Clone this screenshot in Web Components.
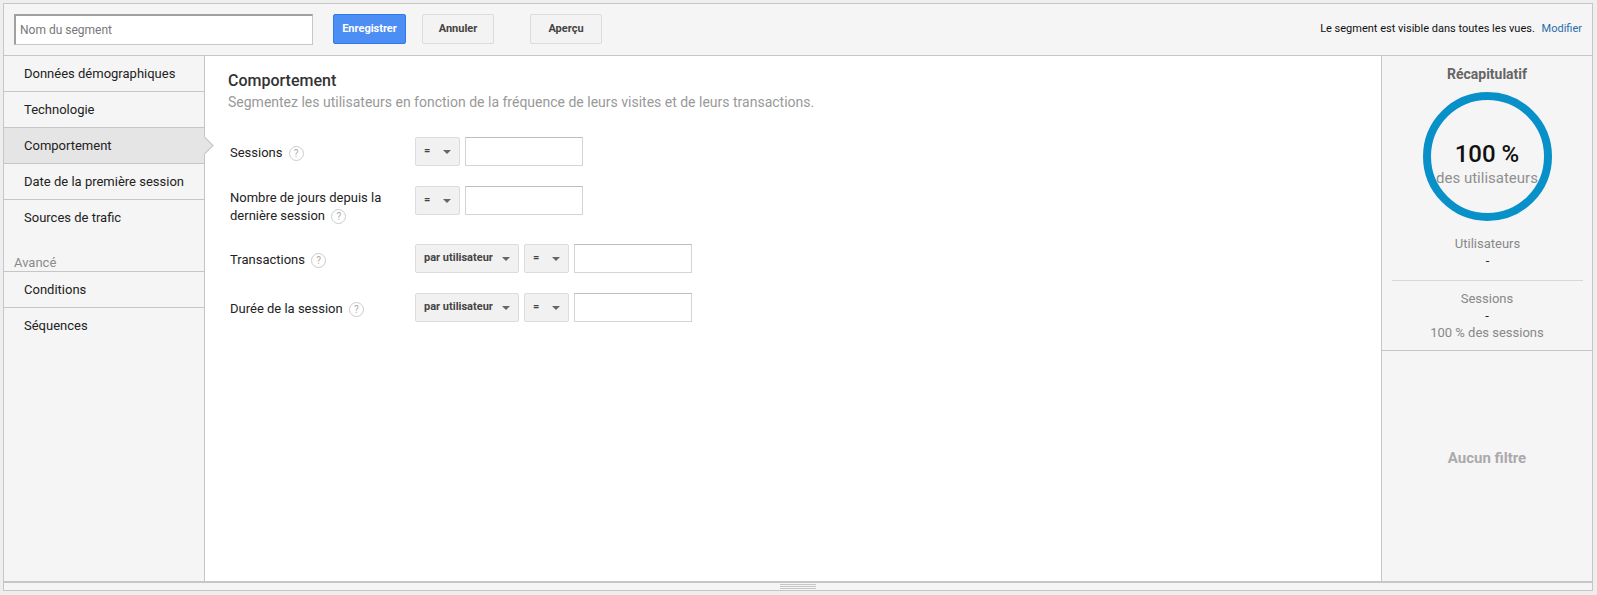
<!DOCTYPE html>
<html lang="fr">
<head>
<meta charset="utf-8">
<title>Segment</title>
<style>
	html, body { margin: 0; height: 100%; background: #eeeeee; overflow: hidden; }
	body { font: 13px Roboto, "Liberation Sans", sans-serif; color: #222; }
</style>
</head>
<body>
<segment-builder>
	<segment-toolbar slot="top"></segment-toolbar>
	<segment-nav slot="nav">
		<segment-nav-item>Données démographiques</segment-nav-item>
		<segment-nav-item>Technologie</segment-nav-item>
		<segment-nav-item active>Comportement</segment-nav-item>
		<segment-nav-item>Date de la première session</segment-nav-item>
		<segment-nav-item last>Sources de trafic</segment-nav-item>
		<segment-nav-item heading>Avancé</segment-nav-item>
		<segment-nav-item>Conditions</segment-nav-item>
		<segment-nav-item last>Séquences</segment-nav-item>
	</segment-nav>
	<segment-form slot="main">
		<segment-field>Sessions</segment-field>
		<segment-field wrap>Nombre de jours depuis la dernière session</segment-field>
		<segment-field scope>Transactions</segment-field>
		<segment-field scope>Durée de la session</segment-field>
	</segment-form>
	<segment-summary slot="side"></segment-summary>
</segment-builder>

<script>
class SegmentBuilder extends HTMLElement {
	constructor() {
		super();
		this.attachShadow({ mode: 'open' });
		this.shadowRoot.innerHTML = `
			<style>
				:host { display: flex; flex-direction: column; box-sizing: border-box; margin: 3px 0 0 3px; width: 1590px; height: 588px; border: 1px solid #c6c6c6; background: #f5f5f5; }
				.body { flex: 1; display: flex; min-height: 0; }
				.main { flex: 1; min-width: 0; background: #fff; }
				.grip { flex: none; box-sizing: border-box; height: 9px; padding-top: 1px; border-top: 2px solid #c6c6c6; display: flex; justify-content: center; align-items: flex-start; }
				.grip i { display: block; box-sizing: border-box; width: 36px; height: 5px; border-top: 1px solid #c6c6c6; border-bottom: 1px solid #c6c6c6; position: relative; }
				.grip i::after { content: ''; position: absolute; left: 0; right: 0; top: 1px; height: 1px; background: #c6c6c6; }
			</style>
			<slot name="top"></slot>
			<div class="body">
				<slot name="nav"></slot>
				<div class="main"><slot name="main"></slot></div>
				<slot name="side"></slot>
			</div>
			<div class="grip"><i></i></div>
		`;
	}
}

class SegmentButton extends HTMLElement {
	constructor() {
		super();
		this.attachShadow({ mode: 'open' });
		this.shadowRoot.innerHTML = `
			<style>
				:host { display: flex; align-items: center; justify-content: center; box-sizing: border-box; height: 30px; padding-bottom: 2px; border: 1px solid #dcdcdc; border-radius: 2px; background: #f3f3f3; color: #444; font-size: 11px; font-weight: 700; }
				:host([primary]) { background: #4d8ef5; border-color: #3079ed; color: #fff; }
			</style>
			<slot></slot>
		`;
	}
}

class SegmentToolbar extends HTMLElement {
	constructor() {
		super();
		this.attachShadow({ mode: 'open' });
		this.shadowRoot.innerHTML = `
			<style>
				:host { display: flex; align-items: flex-start; box-sizing: border-box; flex: none; height: 52px; padding: 10px 10px 0 10px; border-bottom: 1px solid #c6c6c6; background: #f5f5f5; }
				input { box-sizing: border-box; width: 299px; height: 31px; margin: 0 20px 0 0; padding: 0 4px; border: 1px solid #c6c6c6; border-top-color: #a0a0a0; border-left-color: #a0a0a0; border-width: 2px 1px 1px 2px; background: #fff; font: 12px Roboto, sans-serif; outline: none; }
				input::placeholder { color: #777; opacity: 1; }
				.save { width: 73px; margin-right: 16px; }
				.cancel { width: 72px; margin-right: 36px; }
				.preview { width: 72px; }
				.note { margin-left: auto; padding-top: 8px; font-size: 11px; color: #111; white-space: nowrap; }
				.note a { margin-left: 4px; color: #2a6ca8; text-decoration: none; }
			</style>
			<input placeholder="Nom du segment" aria-label="Nom du segment">
			<segment-button class="save" primary>Enregistrer</segment-button>
			<segment-button class="cancel">Annuler</segment-button>
			<segment-button class="preview">Aperçu</segment-button>
			<div class="note">Le segment est visible dans toutes les vues. <a href="#">Modifier</a></div>
		`;
	}
}

class SegmentNav extends HTMLElement {
	constructor() {
		super();
		this.attachShadow({ mode: 'open' });
		this.shadowRoot.innerHTML = `
			<style>
				:host { display: block; box-sizing: border-box; flex: none; width: 201px; border-right: 1px solid #c6c6c6; background: #f5f5f5; }
			</style>
			<slot></slot>
		`;
	}
}

class SegmentNavItem extends HTMLElement {
	constructor() {
		super();
		this.attachShadow({ mode: 'open' });
		this.shadowRoot.innerHTML = `
			<style>
				:host { display: flex; align-items: center; box-sizing: border-box; height: 36px; padding: 0 0 1px 20px; border-bottom: 1px solid #c6c6c6; color: #222; position: relative; white-space: nowrap; }
				:host([last]) { border-bottom-color: transparent; }
				:host([active]) { background: #e5e5e5; }
				/* the little arrow that points at the form */
				:host([active])::after { content: ''; position: absolute; right: -7px; top: 11px; width: 13px; height: 13px; box-sizing: border-box; background: #e5e5e5; border-top: 1px solid #c6c6c6; border-right: 1px solid #c6c6c6; transform: rotate(45deg); }
				:host([heading]) { padding: 18px 0 0 10px; color: #8a8a8a; }
			</style>
			<slot></slot>
		`;
	}
}

class SegmentForm extends HTMLElement {
	constructor() {
		super();
		this.attachShadow({ mode: 'open' });
		this.shadowRoot.innerHTML = `
			<style>
				:host { display: block; padding: 16px 0 0 23px; }
				h2 { margin: 0; font-size: 16px; font-weight: 500; line-height: 18px; color: #333; }
				p { margin: 3px 0 26px; font-size: 14px; line-height: 18px; color: #999; }
			</style>
			<h2>Comportement</h2>
			<p>Segmentez les utilisateurs en fonction de la fréquence de leurs visites et de leurs transactions.</p>
			<slot></slot>
		`;
	}
}

class SegmentSelect extends HTMLElement {
	constructor() {
		super();
		this.attachShadow({ mode: 'open' });
		this.shadowRoot.innerHTML = `
			<style>
				:host { display: flex; align-items: center; box-sizing: border-box; flex: none; height: 29px; padding: 0 8px 3px 8px; border: 1px solid #dcdcdc; border-radius: 2px; background: #f1f1f1; color: #444; font-size: 11px; font-weight: 700; white-space: nowrap; }
				i { margin: 3px 0 0 auto; border: 4px solid transparent; border-top-color: #666; border-bottom: 0; }
			</style>
			<slot></slot><i></i>
		`;
	}
}

class SegmentField extends HTMLElement {
	constructor() {
		super();
		this.attachShadow({ mode: 'open' });
		this.shadowRoot.innerHTML = `
			<style>
				:host { display: flex; align-items: flex-start; height: 29px; margin-bottom: 20px; }
				:host([wrap]) { height: 38px; }
				.label { box-sizing: border-box; flex: none; width: 187px; padding: 7px 30px 0 2px; line-height: 18px; color: #222; }
				:host([wrap]) .label { padding-top: 3px; }
				.help { display: inline-block; box-sizing: border-box; width: 15px; height: 15px; margin-left: 3px; border: 1px solid #ccc; border-radius: 50%; color: #aaa; font-size: 10px; line-height: 13px; text-align: center; vertical-align: 0; }
				.ctrls { display: flex; gap: 5px; }
				.scope { width: 104px; }
				.op { width: 45px; }
				.ctrls input { box-sizing: border-box; width: 118px; height: 29px; margin: 0; border: 1px solid #d4d4d4; border-top-color: #bdbdbd; background: #fff; outline: none; }
			</style>
			<div class="label"><slot></slot> <span class="help">?</span></div>
			<div class="ctrls"></div>
		`;
	}

	connectedCallback() {
		const ctrls = this.shadowRoot.querySelector('.ctrls');
		if (ctrls.children.length) return;
		const name = this.textContent.trim();
		if (this.hasAttribute('scope')) {
			ctrls.insertAdjacentHTML('beforeend', '<segment-select class="scope">par utilisateur</segment-select>');
		}
		ctrls.insertAdjacentHTML('beforeend', `<segment-select class="op">=</segment-select><input aria-label="${name}">`);
	}
}

class SegmentSummary extends HTMLElement {
	constructor() {
		super();
		this.attachShadow({ mode: 'open' });
		this.shadowRoot.innerHTML = `
			<style>
				:host { display: flex; flex-direction: column; box-sizing: border-box; flex: none; width: 211px; border-left: 1px solid #c6c6c6; background: #f5f5f5; color: #888; text-align: center; line-height: 17px; }
				h3 { margin: 9px 0 9px; font-size: 14px; font-weight: 700; line-height: 18px; color: #666; }
				.ring { box-sizing: border-box; width: 129px; height: 129px; margin: 0 auto 14px; padding-top: 39px; border: 8.5px solid #0891c8; border-radius: 50%; }
				.ring b { display: block; font-size: 24px; font-weight: 500; line-height: 31px; color: #111; }
				.ring span { display: block; margin: 0 -14px; font-size: 15px; line-height: 16px; color: #8f8f8f; white-space: nowrap; }
				.stat { flex: none; }
				.dash { color: #222; }
				.users { height: 45px; margin: 0 9px 0 10px; border-bottom: 1px solid #d8d8d8; }
				.sessions { height: 70px; padding-top: 9px; box-sizing: border-box; border-bottom: 1px solid #c6c6c6; }
				.filter { flex: 1; display: flex; align-items: center; justify-content: center; padding-bottom: 15px; font-size: 15px; font-weight: 700; color: #aaa; }
			</style>
			<h3>Récapitulatif</h3>
			<div class="ring"><b>100 %</b><span>des utilisateurs</span></div>
			<div class="stat users">Utilisateurs<div class="dash">-</div></div>
			<div class="stat sessions">Sessions<div class="dash">-</div>100 % des sessions</div>
			<div class="filter">Aucun filtre</div>
		`;
	}
}

customElements.define('segment-builder', SegmentBuilder);
customElements.define('segment-button', SegmentButton);
customElements.define('segment-toolbar', SegmentToolbar);
customElements.define('segment-nav', SegmentNav);
customElements.define('segment-nav-item', SegmentNavItem);
customElements.define('segment-form', SegmentForm);
customElements.define('segment-select', SegmentSelect);
customElements.define('segment-field', SegmentField);
customElements.define('segment-summary', SegmentSummary);
</script>
</body>
</html>
